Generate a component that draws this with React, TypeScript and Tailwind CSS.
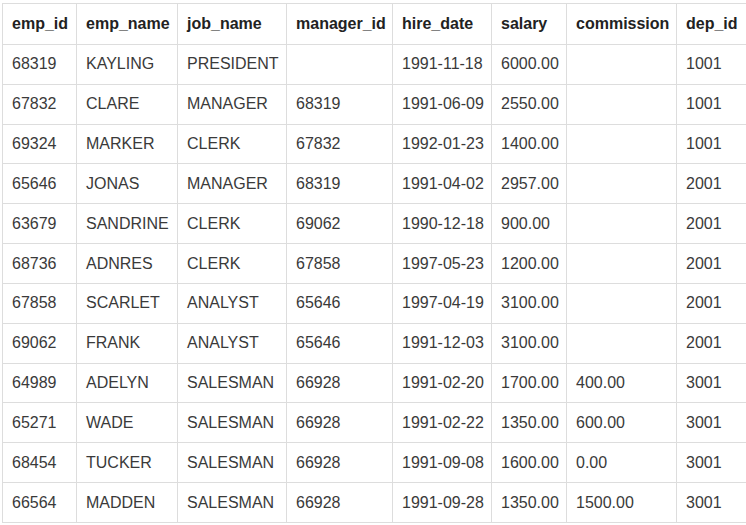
const columns = [
  { key: "emp_id", width: "w-[74px]" },
  { key: "emp_name", width: "w-[101px]" },
  { key: "job_name", width: "w-[109px]" },
  { key: "manager_id", width: "w-[106px]" },
  { key: "hire_date", width: "w-[99px]" },
  { key: "salary", width: "w-[75px]" },
  { key: "commission", width: "w-[110px]" },
  { key: "dep_id", width: "w-[90px]" },
];

const rows: string[][] = [
  ["68319", "KAYLING", "PRESIDENT", "", "1991-11-18", "6000.00", "", "1001"],
  ["67832", "CLARE", "MANAGER", "68319", "1991-06-09", "2550.00", "", "1001"],
  ["69324", "MARKER", "CLERK", "67832", "1992-01-23", "1400.00", "", "1001"],
  ["65646", "JONAS", "MANAGER", "68319", "1991-04-02", "2957.00", "", "2001"],
  ["63679", "SANDRINE", "CLERK", "69062", "1990-12-18", "900.00", "", "2001"],
  ["68736", "ADNRES", "CLERK", "67858", "1997-05-23", "1200.00", "", "2001"],
  ["67858", "SCARLET", "ANALYST", "65646", "1997-04-19", "3100.00", "", "2001"],
  ["69062", "FRANK", "ANALYST", "65646", "1991-12-03", "3100.00", "", "2001"],
  ["64989", "ADELYN", "SALESMAN", "66928", "1991-02-20", "1700.00", "400.00", "3001"],
  ["65271", "WADE", "SALESMAN", "66928", "1991-02-22", "1350.00", "600.00", "3001"],
  ["68454", "TUCKER", "SALESMAN", "66928", "1991-09-08", "1600.00", "0.00", "3001"],
  ["66564", "MADDEN", "SALESMAN", "66928", "1991-09-28", "1350.00", "1500.00", "3001"],
];

export default function App() {
  return (
    <div className="h-[525px] w-[746px] overflow-hidden bg-white pl-[2px] pt-[3px] font-['Liberation_Sans',Arial,sans-serif] text-[16px]">
      <table className="w-[764px] table-fixed border-collapse">
        <thead>
          <tr className="h-[41px]">
            {columns.map((c) => (
              <th
                key={c.key}
                className={`${c.width} whitespace-nowrap border border-[#dddddd] px-[9px] text-left align-middle font-bold text-[#222222]`}
              >
                {c.key}
              </th>
            ))}
          </tr>
        </thead>
        <tbody>
          {rows.map((r) => (
            <tr key={r[0]} className="h-[39.83px]">
              {r.map((cell, i) => (
                <td
                  key={i}
                  className="whitespace-nowrap border border-[#dddddd] px-[9px] align-middle text-[#3a3a3a]"
                >
                  {cell}
                </td>
              ))}
            </tr>
          ))}
        </tbody>
      </table>
    </div>
  );
}
